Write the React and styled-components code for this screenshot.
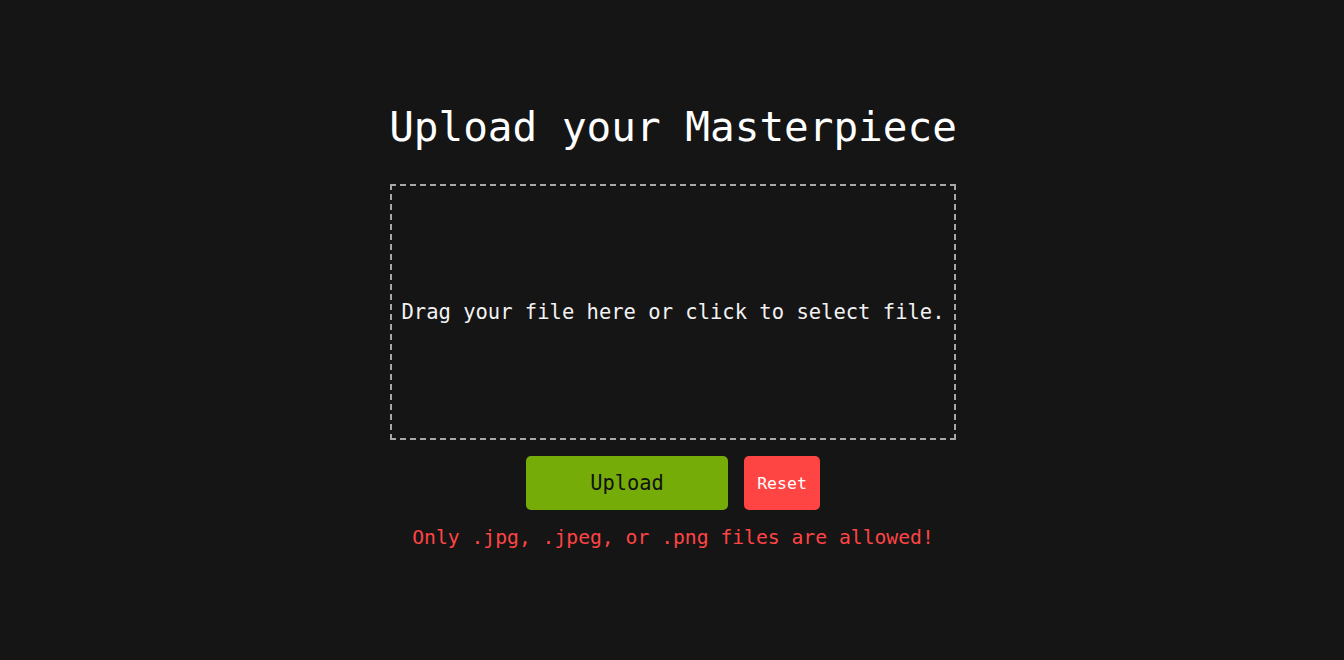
import React from "react";
import styled, { createGlobalStyle } from "styled-components";

const GlobalStyle = createGlobalStyle`
  html, body {
    margin: 0;
    padding: 0;
    background: #151515;
  }
  body {
    font-family: "DejaVu Sans Mono", "Liberation Mono", monospace;
    color: #ffffff;
  }
`;

const Page = styled.main`
  min-height: 100vh;
  display: flex;
  align-items: center;
  justify-content: center;
  padding: 0 0 7px 2px;
  box-sizing: border-box;
`;

const Container = styled.div`
  display: flex;
  flex-direction: column;
  align-items: center;
`;

const Title = styled.h1`
  margin: 0 0 32px;
  font-size: 41px;
  font-weight: 500;
  line-height: 49px;
  color: #ffffff;
`;

const Dropzone = styled.label`
  width: 566px;
  height: 256px;
  box-sizing: border-box;
  border: 2px dashed #a8a8a8;
  display: flex;
  align-items: center;
  justify-content: center;
  font-size: 20.5px;
  color: #f2f2f2;
  cursor: pointer;

  input {
    display: none;
  }
`;

const Actions = styled.div`
  display: flex;
  gap: 16px;
  margin-top: 16px;
`;

const Button = styled.button`
  height: 54px;
  width: ${(p) => p.$width}px;
  border: none;
  border-radius: 5px;
  font-family: inherit;
  font-size: ${(p) => p.$size}px;
  font-weight: ${(p) => p.$weight || 400};
  background: ${(p) => p.$bg};
  color: ${(p) => p.$color};
  cursor: pointer;
  padding: 0;
`;

const ErrorText = styled.p`
  margin: 16px 0 0;
  font-size: 19.7px;
  line-height: 24px;
  color: #ff4444;
`;

const App = () => {
  return (
    <>
      <GlobalStyle />
      <Page>
        <Container>
          <Title>Upload your Masterpiece</Title>
          <Dropzone>
            <input type="file" accept=".jpg,.jpeg,.png" />
            Drag your file here or click to select file.
          </Dropzone>
          <Actions>
            <Button $width={202} $size={20.4} $weight={500} $bg="#76ac08" $color="#111111">
              Upload
            </Button>
            <Button $width={76} $size={16.5} $bg="#ff4444" $color="#ffffff">
              Reset
            </Button>
          </Actions>
          <ErrorText>Only .jpg, .jpeg, or .png files are allowed!</ErrorText>
        </Container>
      </Page>
    </>
  );
};

export default App;
